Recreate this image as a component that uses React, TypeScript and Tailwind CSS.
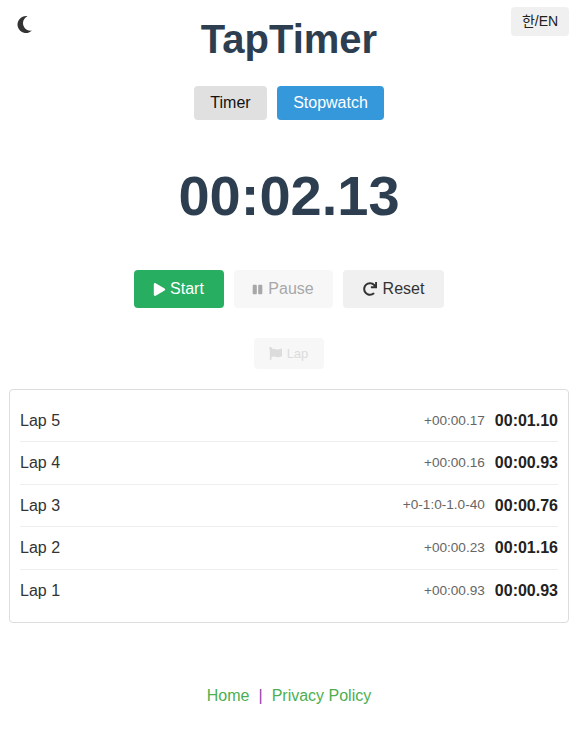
import { FaPlay, FaPause, FaRedo, FaFlag } from 'react-icons/fa'

const laps = [
  { name: 'Lap 5', split: '+00:00.17', total: '00:01.10' },
  { name: 'Lap 4', split: '+00:00.16', total: '00:00.93' },
  { name: 'Lap 3', split: '+0-1:0-1.0-40', total: '00:00.76' },
  { name: 'Lap 2', split: '+00:00.23', total: '00:01.16' },
  { name: 'Lap 1', split: '+00:00.93', total: '00:00.93' },
]

function App() {
  return (
    <div className="min-h-[732px] bg-white font-['Liberation_Sans','Noto_Sans_CJK_KR',sans-serif] text-[#333]">
      <div className="relative ml-[9px] w-[560px]">
        {/* Dark mode and language toggles sit over the header */}
        <button className="absolute left-[8px] top-[16px] text-[#333]">
          <svg width="15" height="17" viewBox="0 0 15 17" fill="currentColor" className="block">
            <path d="M10.5 0.2 A8.5 8.5 0 1 0 15 14.6 A7.6 7.6 0 0 1 10.5 0.2 Z" />
          </svg>
        </button>
        <button className="absolute right-0 top-[7px] h-[29px] w-[58px] rounded bg-[#f0f0f0] text-[14px] text-[#222]">
          한/EN
        </button>

        <h1 className="pt-[14px] text-center text-[40px] font-bold leading-[50px] text-[#2c3e50]">TapTimer</h1>

        <div className="mt-[22px] flex justify-center gap-[10px]">
          <button className="h-[34px] w-[73px] rounded bg-[#e0e0e0] text-[16px] text-[#111]">Timer</button>
          <button className="h-[34px] w-[107px] rounded bg-[#3498db] text-[16px] text-white">Stopwatch</button>
        </div>

        <div className="mt-[44px] text-center text-[56px] font-bold leading-[64px] text-[#2c3e50]">00:02.13</div>

        <div className="mt-[42px] flex justify-center gap-[10px]">
          <button className="flex h-[38px] w-[90px] items-center justify-center gap-[4px] rounded bg-[#27ae60] pr-[1px] text-[16px] text-white">
            <FaPlay className="text-[13px]" /> Start
          </button>
          <button className="flex h-[38px] w-[99px] items-center justify-center gap-[5px] rounded bg-[#f7f7f7] pr-[1px] text-[16px] text-[#a8a8a8]">
            <FaPause className="text-[11px]" /> Pause
          </button>
          <button className="flex h-[38px] w-[101px] items-center justify-center gap-[6px] rounded bg-[#f0f0f0] text-[16px] text-[#333]">
            <FaRedo className="text-[14px]" /> Reset
          </button>
        </div>

        <div className="mt-[30px] flex justify-center">
          <button className="flex h-[31px] w-[70px] items-center justify-center gap-[5px] rounded bg-[#f7f7f7] pr-[1px] text-[13px] text-[#dcdcdc]">
            <FaFlag className="text-[13px]" /> Lap
          </button>
        </div>

        <div className="mt-[20px] rounded border border-[#ddd] px-[10px] py-[10px]">
          {laps.map((lap, i) => (
            <div
              key={lap.name}
              className={`flex h-[42.45px] items-center justify-between ${i < laps.length - 1 ? 'border-b border-[#eee]' : ''}`}
            >
              <span className="text-[16px] text-[#333]">{lap.name}</span>
              <span className="flex items-center gap-[10px]">
                <span className="text-[13.6px] text-[#666]">{lap.split}</span>
                <span className="text-[16px] font-bold text-[#222]">{lap.total}</span>
              </span>
            </div>
          ))}
        </div>

        <div className="mt-[61px] text-center text-[16px]">
          <a className="text-[#4caf50]">Home</a>
          <span className="mx-[9px] text-[#8e44ad]">|</span>
          <a className="text-[#4caf50]">Privacy Policy</a>
        </div>
      </div>
    </div>
  )
}

export default App
